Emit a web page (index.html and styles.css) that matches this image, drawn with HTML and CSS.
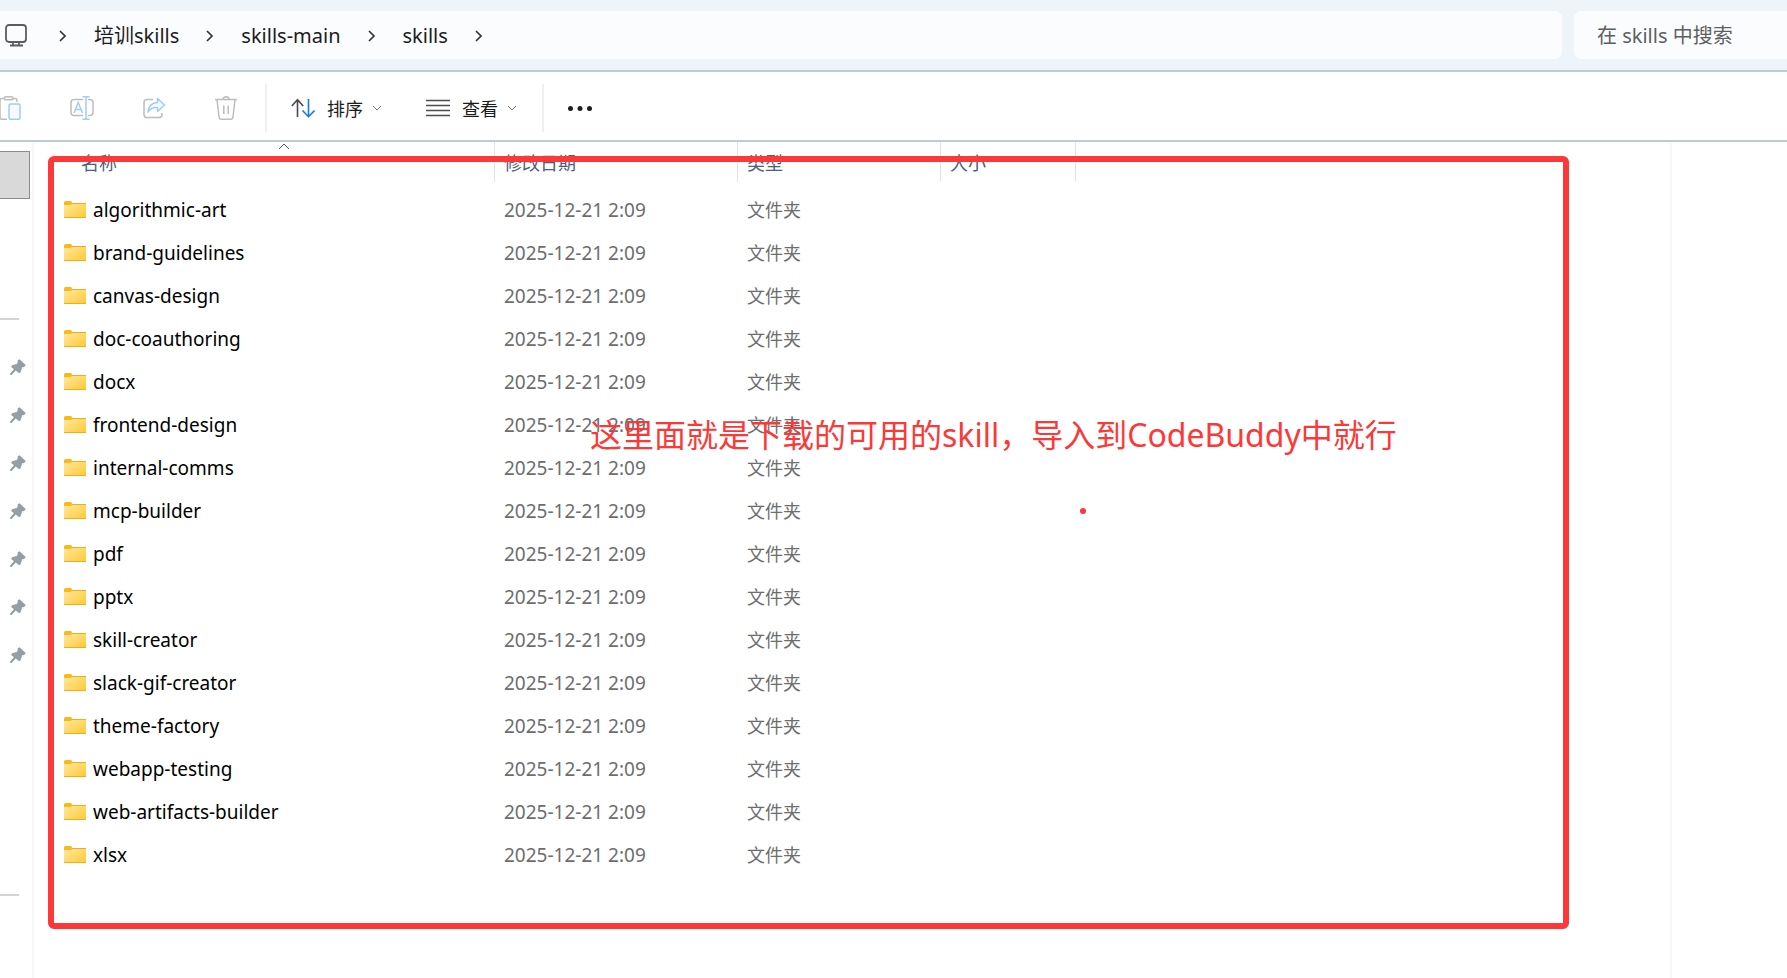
FILE: index.html
```html
<!DOCTYPE html>
<html lang="zh-CN">
<head>
    <meta charset="UTF-8">
    <meta name="viewport" content="width=device-width, initial-scale=1.0">
    <title>skills</title>
    <link rel="stylesheet" href="styles.css">
</head>
<body>

    <!-- 图标 -->
    <svg class="symbols" aria-hidden="true">
        <defs>
            <linearGradient id="folderFill" x1="0" y1="0" x2="1" y2="1">
                <stop offset="0" stop-color="#ffe9a0"/>
                <stop offset="1" stop-color="#ffc934"/>
            </linearGradient>
        </defs>
        <symbol id="chevron" viewBox="0 0 8 12">
            <path d="M1 1l5 5-5 5" fill="none" stroke="#333" stroke-width="1.7"/>
        </symbol>
        <symbol id="down" viewBox="0 0 10 6">
            <path d="M1 1l4 4 4-4" fill="none" stroke="#777" stroke-width="1"/>
        </symbol>
        <symbol id="folder" viewBox="0 0 22 18">
            <path d="M0 1.500Q0 0 1.500 0H6.500Q8 0 8 1.500V5H0z" fill="#fbb917"/>
            <path d="M0 4h7l1.500-2H22v15H0z" fill="url(#folderFill)"/>
            <path d="M8 2.500h14M0 16.500h22" stroke="#efad22"/>
        </symbol>
        <symbol id="pin" viewBox="0 0 16 16">
            <path d="M9.500 0.300l6.200 5.700-1.200 1.700-2.500 0.800-1.500 5-1.500 0.800-3.200-2.800L1.500 16 0 15.800V14.500l4-4.200L1.200 8l0.800-1.800 5.200-1.400 0.600-3.500z" fill="#939fa5"/>
        </symbol>
    </svg>

    <!-- 地址栏 -->
    <header class="address-bar">
        <nav class="breadcrumb">
            <svg class="monitor" viewBox="0 0 24 24" fill="none" stroke="#5c5c5c" stroke-width="1.800">
                <rect x="2" y="1" width="20" height="17" rx="3"/>
                <path d="M9 18v3M15 18v3M6 21.500h13"/>
            </svg>
            <svg class="chevron"><use href="#chevron"/></svg>
            <a href="#">培训skills</a>
            <svg class="chevron"><use href="#chevron"/></svg>
            <a href="#">skills-main</a>
            <svg class="chevron"><use href="#chevron"/></svg>
            <a href="#">skills</a>
            <svg class="chevron"><use href="#chevron"/></svg>
        </nav>
        <input type="text" class="search" placeholder="在 skills 中搜索" aria-label="搜索">
    </header>

    <!-- 工具栏 -->
    <div class="toolbar">
        <div class="group edit">
            <button aria-label="粘贴" disabled>
                <svg viewBox="0 0 24 24" fill="none" stroke="#bdbdbd" stroke-width="1.500">
                    <path d="M7 2.500H4Q2 2.500 2 4.500V21Q2 23.300 4 23.300H9M15 2.500H17Q19 2.500 19 4.500V6"/>
                    <rect x="6.500" y="0.800" width="8.500" height="3" rx="1.500"/>
                    <rect x="11" y="8" width="11" height="15.300" rx="1.500" fill="#f4faff" stroke="#9fcdf3"/>
                </svg>
            </button>
            <button aria-label="重命名" disabled>
                <svg viewBox="0 0 24 24" fill="none" stroke="#bdbdbd" stroke-width="1.500">
                    <path d="M13 3.500H4Q1 3.500 1 6.500V16.500Q1 19.500 4 19.500H13M18 3.500H20Q23 3.500 23 6.500V16.500Q23 19.500 20 19.500H18"/>
                    <path d="M4 17l4.200-10.500L12.500 17M5.500 13.500h5.500M12.500 0.800h7M12.500 23.300h7M16 0.800v22.500" stroke="#9fcdf3"/>
                </svg>
            </button>
            <button aria-label="共享" disabled>
                <svg viewBox="0 0 24 24" fill="none" stroke="#bdbdbd" stroke-width="1.500">
                    <path d="M11 3.500H5Q2 3.500 2 6.500V18.500Q2 21.500 5 21.500H17Q20 21.500 20 18.500V17"/>
                    <path d="M15.500 2.500l7 6.500-7 6.500v-4Q9 11 6 16Q7 7 15.500 6.500z" fill="#f4faff" stroke="#9fcdf3" stroke-linejoin="round"/>
                </svg>
            </button>
            <button aria-label="删除" disabled>
                <svg viewBox="0 0 24 24" fill="none" stroke="#bdbdbd" stroke-width="1.500">
                    <path d="M1 3.500h22M3 3.500l2 17.500Q5.300 23.300 7.300 23.300h9.400Q18.700 23.300 19 21L21 3.500M9 3.500Q9 0.800 12 0.800T15 3.500M9.800 9.500v8.500M14.200 9.500v8.500"/>
                </svg>
            </button>
        </div>
        <div class="group menus">
            <button>
                <svg viewBox="0 0 24 24" fill="none" stroke-width="1.600">
                    <path d="M6.500 21V4M0.800 10l5.700-6.200 5.700 6.200" stroke="#4a4a4a"/>
                    <path d="M17.500 3v17.500M11.500 14.500l6 6.200 6-6.200" stroke="#0f7fdb"/>
                </svg>
                排序
                <svg class="down"><use href="#down"/></svg>
            </button>
            <button>
                <svg viewBox="0 0 24 24" stroke="#4d4d4d" stroke-width="1.400">
                    <path d="M0 4.500h24M0 9.500h24M0 14.500h24M0 19.500h24"/>
                </svg>
                查看
                <svg class="down"><use href="#down"/></svg>
            </button>
        </div>
        <button class="more" aria-label="更多">
            <svg viewBox="0 0 24 24" fill="#1f1f1f">
                <circle cx="2.500" cy="12.500" r="2.500"/>
                <circle cx="12" cy="12.500" r="2.500"/>
                <circle cx="21.500" cy="12.500" r="2.500"/>
            </svg>
        </button>
    </div>

    <main>
        <!-- 导航窗格 -->
        <aside>
            <div class="selected"></div>
            <hr>
            <ul class="pins">
                <li><svg><use href="#pin"/></svg></li>
                <li><svg><use href="#pin"/></svg></li>
                <li><svg><use href="#pin"/></svg></li>
                <li><svg><use href="#pin"/></svg></li>
                <li><svg><use href="#pin"/></svg></li>
                <li><svg><use href="#pin"/></svg></li>
                <li><svg><use href="#pin"/></svg></li>
            </ul>
            <hr>
        </aside>

        <!-- 文件列表 -->
        <section class="files">
            <div class="list">
                <table>
                    <colgroup>
                        <col class="col-name">
                        <col class="col-date">
                        <col class="col-type">
                        <col class="col-size">
                    </colgroup>
                    <thead>
                        <tr>
                            <th><span>名称</span><svg class="sort" viewBox="0 0 12 7"><path d="M1 6l5-5 5 5" fill="none" stroke="#555"/></svg></th>
                            <th><span>修改日期</span></th>
                            <th><span>类型</span></th>
                            <th><span>大小</span></th>
                        </tr>
                    </thead>
                    <tbody id="fileRows"></tbody>
                </table>
                <div class="frame">
                    <p class="note">这里面就是下载的可用的skill，导入到CodeBuddy中就行</p>
                    <span class="dot"></span>
                </div>
            </div>
        </section>
        <div class="preview"></div>
    </main>

    <script>
        const folders = [
            "algorithmic-art", "brand-guidelines", "canvas-design", "doc-coauthoring",
            "docx", "frontend-design", "internal-comms", "mcp-builder",
            "pdf", "pptx", "skill-creator", "slack-gif-creator",
            "theme-factory", "webapp-testing", "web-artifacts-builder", "xlsx"
        ];

        // 填充文件夹列表
        document.getElementById("fileRows").innerHTML = folders.map(name => `
            <tr>
                <td class="name"><svg class="folder"><use href="#folder"/></svg>${name}</td>
                <td>2025-12-21 2:09</td>
                <td class="type">文件夹</td>
                <td></td>
            </tr>
        `).join("");
    </script>

</body>
</html>
```
FILE: styles.css
```css
* {
    box-sizing: border-box;
}

body {
    margin: 0;
    min-height: 100vh;
    display: flex;
    flex-direction: column;
    background-color: #fff;
    color: #1b1b1b;
    font-family: "Noto Sans", "Noto Sans CJK SC", sans-serif;
    font-size: 18px;
    overflow-x: hidden;
}

svg {
    display: block;
    flex-shrink: 0;
}

.symbols {
    position: absolute;
    width: 0;
    height: 0;
}

/* 地址栏 */
.address-bar {
    display: flex;
    gap: 12px;
    height: 72px;
    padding: 11px 0;
    background-color: #eef4f7;
    border-bottom: 2px solid #b9cdd5;
}

.breadcrumb {
    flex: 1;
    display: flex;
    align-items: center;
    gap: 27px;
    height: 48px;
    padding: 2px 0 0 4px;
    background-color: #fbfcfe;
    border-radius: 0 7px 7px 0;
    font-size: 20px;
}

.breadcrumb a {
    color: #1b1b1b;
    text-decoration: none;
    line-height: 28px;
    white-space: nowrap;
}

.monitor {
    width: 24px;
    height: 24px;
    margin-right: 4px;
}

.chevron {
    width: 8px;
    height: 12px;
}

.search {
    width: 213px;
    height: 48px;
    padding: 0 0 0 23px;
    border: none;
    border-radius: 7px 0 0 7px;
    background-color: #fbfcfe;
    font-family: inherit;
    font-size: 20px;
}

.search::placeholder {
    color: #5f5f5f;
    opacity: 1;
}

/* 工具栏 */
.toolbar {
    display: flex;
    align-items: center;
    height: 70px;
    padding-top: 4px;
    border-bottom: 2px solid #b9cdd5;
}

.toolbar button {
    display: flex;
    align-items: center;
    padding: 0;
    border: none;
    background: none;
    color: #1b1b1b;
    font-family: inherit;
    font-size: 18px;
}

.toolbar svg {
    width: 24px;
    height: 24px;
}

.group {
    display: flex;
    align-items: center;
    height: 48px;
    border-right: 2px solid #efefef;
}

.edit {
    gap: 48px;
    width: 267px;
    padding-right: 27px;
    justify-content: flex-end;
}

.menus {
    gap: 44px;
    padding: 0 25px 0 24px;
}

.menus button {
    gap: 12px;
}

.toolbar .down {
    width: 10px;
    height: 6px;
    margin-left: -3px;
}

.more {
    margin-left: 24px;
}

/* 主区域 */
main {
    flex: 1;
    display: flex;
}

/* 导航窗格 */
aside {
    width: 34px;
    padding-top: 9px;
    border-right: 2px solid #f7f7f7;
}

.selected {
    width: 30px;
    height: 48px;
    border: 1px solid #8c8c8c;
    border-left: none;
    background-color: #d9d9d9;
}

aside hr {
    width: 19px;
    height: 2px;
    margin: 119px 0 23px;
    border: none;
    background-color: #d4d4d4;
}

.pins {
    margin: 0;
    padding: 0 0 96px;
    list-style: none;
}

.pins li {
    display: flex;
    align-items: center;
    height: 48px;
    padding-left: 10px;
}

.pins svg {
    width: 16px;
    height: 16px;
}

/* 文件列表 */
.files {
    flex: 1;
}

.list {
    position: relative;
    padding-bottom: 53px;
}

table {
    width: 1042px;
    table-layout: fixed;
    border-collapse: collapse;
}

.col-name { width: 461px; }
.col-date { width: 243px; }
.col-type { width: 203px; }
.col-size { width: 135px; }

th {
    position: relative;
    height: 46px;
    padding: 0;
    color: #4c607a;
    font-weight: normal;
    text-align: left;
    vertical-align: top;
}

th span {
    display: block;
    height: 40px;
    padding-left: 9px;
    border-right: 1px solid #e3e3e3;
    line-height: 42px;
}

th:first-child span {
    padding-left: 47px;
}

.sort {
    position: absolute;
    top: 1px;
    right: 205px;
    width: 12px;
    height: 7px;
}

td {
    height: 43px;
    padding: 0 0 0 9px;
    color: #6d6d6d;
    font-size: 19px;
    line-height: 28px;
    white-space: nowrap;
}

.name {
    display: flex;
    align-items: center;
    gap: 7px;
    padding-left: 30px;
    color: #000;
}

.type {
    font-size: 18px;
}

.folder {
    width: 22px;
    height: 18px;
}

/* 红色标注 */
.frame {
    position: absolute;
    top: 14px;
    right: 101px;
    bottom: 0;
    left: 14px;
    border: 6px solid #fc3838;
    border-radius: 6px;
}

.note {
    position: absolute;
    top: 253px;
    left: 536px;
    margin: 0;
    color: #fc3838;
    font-size: 32px;
    line-height: 40px;
    white-space: nowrap;
}

.dot {
    position: absolute;
    top: 346px;
    left: 1026px;
    width: 6px;
    height: 6px;
    border-radius: 50%;
    background-color: #fc3838;
}

/* 右侧窗格 */
.preview {
    width: 117px;
    border-left: 2px solid #f7f7f7;
}
```
